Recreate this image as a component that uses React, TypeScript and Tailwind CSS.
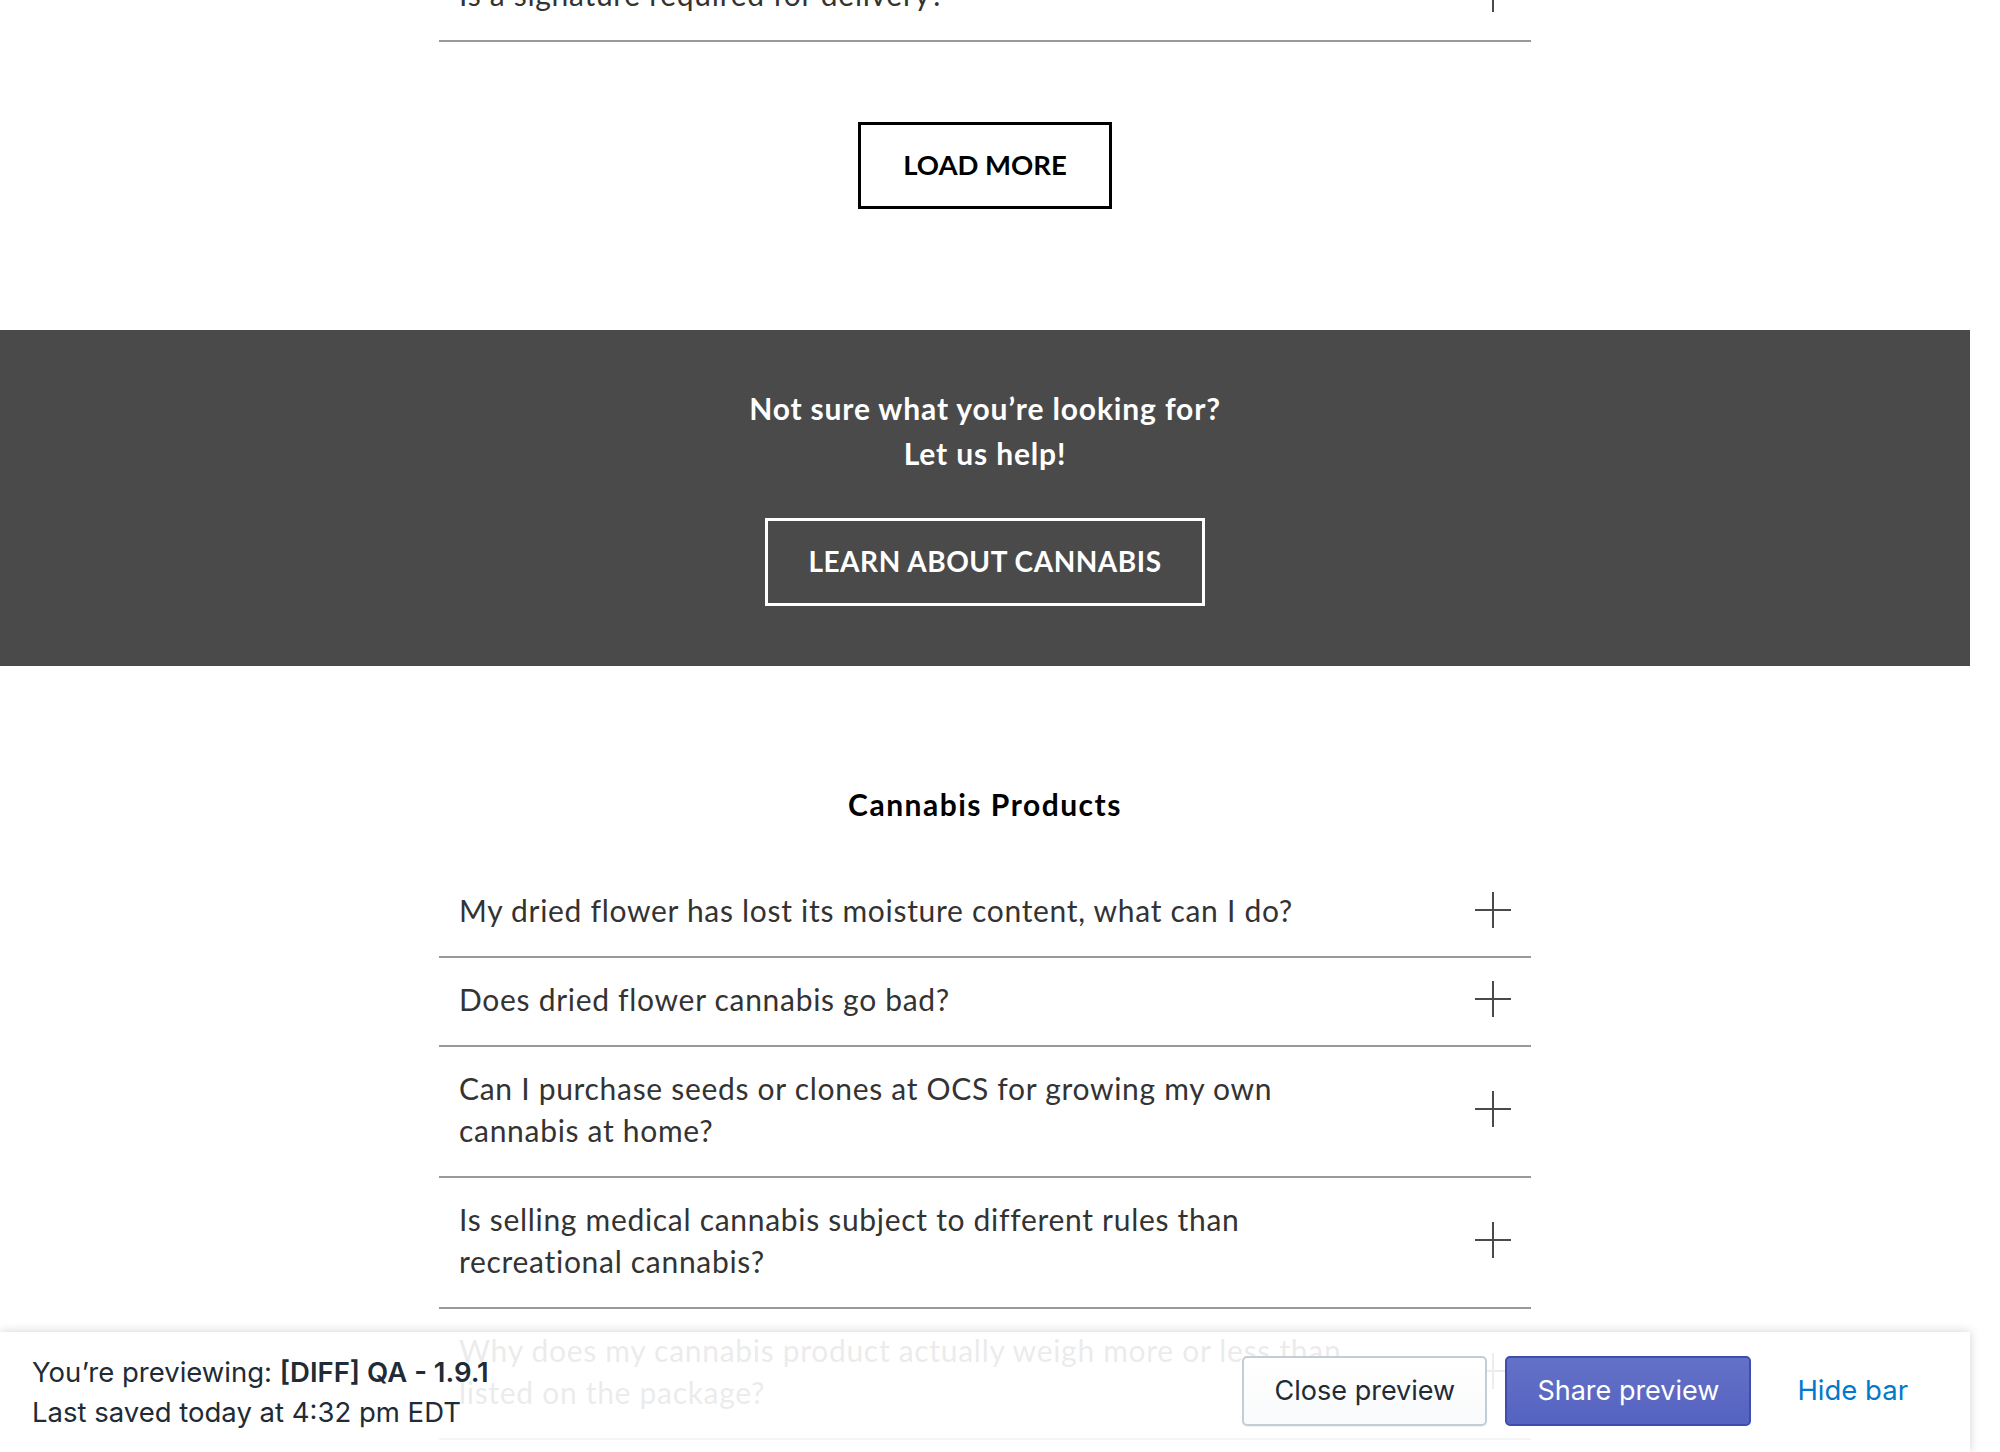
import React from "react";

function Plus() {
  return (
    <svg width="36" height="36" viewBox="0 0 36 36" className="shrink-0">
      <line x1="18" y1="0" x2="18" y2="36" stroke="#4a4a4a" strokeWidth="2" />
      <line x1="0" y1="18" x2="36" y2="18" stroke="#4a4a4a" strokeWidth="2" />
    </svg>
  );
}

function FaqRow({ lines }: { lines: string[] }) {
  return (
    <div className="flex items-center justify-between border-b-2 border-[#999999] pl-[20px] pr-[20px] pt-[20px] pb-[25px]">
      <p className="w-[980px] text-[30px] leading-[42px] tracking-[0.7px] text-[#333333]">
        {lines.map((l, i) => (
          <React.Fragment key={i}>
            {i > 0 && <br />}
            {l}
          </React.Fragment>
        ))}
      </p>
      <Plus />
    </div>
  );
}

export default function App() {
  return (
    <div className="relative h-[1452px] w-[2000px] overflow-hidden bg-white font-['Lato',sans-serif]">
      <div className="w-[1970px]">
        <section className="mx-auto mt-[-47px] w-[1092px]">
          <FaqRow lines={["Is a signature required for delivery?"]} />
        </section>

        <div className="flex justify-center pt-[80px] pb-[121px]">
          <button className="flex h-[87px] items-center border-[3px] border-black px-[42px] pb-[2px] text-[27.5px] font-bold leading-none text-black">
            LOAD MORE
          </button>
        </div>

        <section className="flex h-[336px] flex-col items-center bg-[#4a4a4a] pt-[56px]">
          <h2 className="text-center text-[30px] font-bold leading-[45px] tracking-[0.85px] text-white">
            Not sure what you’re looking for?
            <br />
            Let us help!
          </h2>
          <button className="mt-[42px] flex h-[88px] items-center border-[3px] border-white px-[40px] pb-[2px] text-[28px] font-bold leading-none tracking-[0.55px] text-white">
            LEARN ABOUT CANNABIS
          </button>
        </section>

        <section className="mx-auto w-[1092px] pt-[121px]">
          <h3 className="text-center text-[30px] font-bold leading-[34px] tracking-[1.5px] text-black">
            Cannabis Products
          </h3>
          <div className="mt-[48px]">
            <FaqRow lines={["My dried flower has lost its moisture content, what can I do?"]} />
            <FaqRow lines={["Does dried flower cannabis go bad?"]} />
            <FaqRow lines={["Can I purchase seeds or clones at OCS for growing my own", "cannabis at home?"]} />
            <FaqRow lines={["Is selling medical cannabis subject to different rules than", "recreational cannabis?"]} />
            <FaqRow lines={["Why does my cannabis product actually weigh more or less than", "listed on the package?"]} />
            <FaqRow lines={["How should I store my cannabis?"]} />
          </div>
        </section>
      </div>

      <div className="absolute bottom-0 left-0 flex h-[120px] w-[1970px] items-center justify-between bg-white/90 pl-[32px] pr-[30px] font-['Inter',sans-serif] text-[#212b36] shadow-[0_0_10px_rgba(0,0,0,0.18)]">
        <div className="text-[27.5px] leading-[40px]">
          <div>
            You’re previewing: <span className="font-semibold">[DIFF] QA - 1.9.1</span>
          </div>
          <div>Last saved today at 4:32 pm EDT</div>
        </div>
        <div className="mb-[2px] flex items-center">
          <button className="flex h-[70px] w-[245px] items-center justify-center rounded-[5px] border-2 border-[#c4cdd5] bg-gradient-to-b from-white to-[#f9fafb] text-[27px] text-[#212b36] shadow-[0_1px_0_rgba(22,29,37,0.05)]">
            Close preview
          </button>
          <button className="ml-[18px] flex h-[70px] w-[246px] items-center justify-center rounded-[5px] border-2 border-[#3f4eae] bg-gradient-to-b from-[#6371c7] to-[#5563c1] text-[27px] text-white">
            Share preview
          </button>
          <button className="ml-[14px] px-[32px] text-[27.5px] text-[#007ace]">Hide bar</button>
        </div>
      </div>
    </div>
  );
}
